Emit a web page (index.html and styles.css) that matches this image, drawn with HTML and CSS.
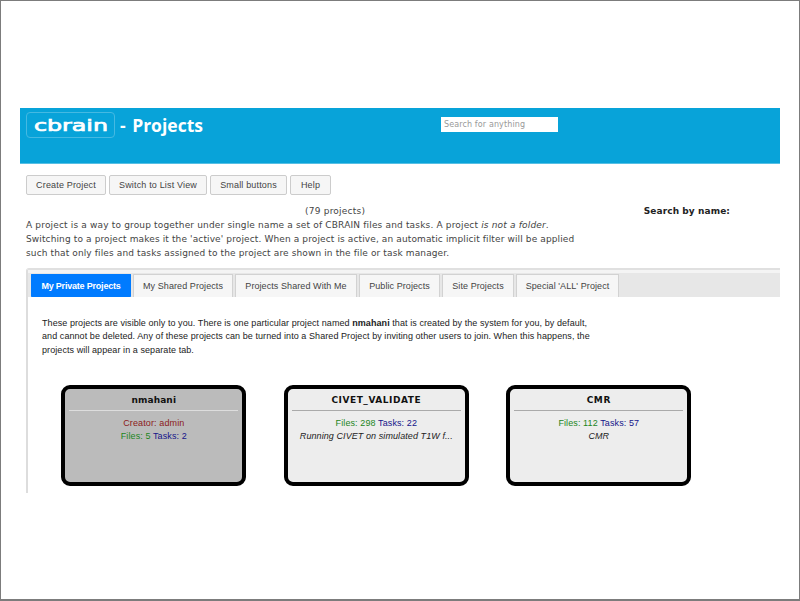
FILE: index.html
```html
<!DOCTYPE html>
<html lang="en">
<head>
<meta charset="utf-8">
<title>CBRAIN - Projects</title>
<link rel="stylesheet" href="styles.css">
</head>
<body>
<div class="page">
  <header class="header">
    <div class="logo"><span class="logo-text">cbrain</span></div>
    <h1 class="title">- Projects</h1>
    <input class="search" type="text" placeholder="Search for anything">
  </header>
  <nav class="actions">
    <button class="btn b1">Create Project</button>
    <button class="btn b2">Switch to List View</button>
    <button class="btn b3">Small buttons</button>
    <button class="btn b4">Help</button>
  </nav>
  <div class="summary">
    <span class="count">(79 projects)</span>
    <strong class="by-name">Search by name:</strong>
  </div>
  <p class="intro">
    <span class="line i1">A project is a way to group together under single name a set of CBRAIN files and tasks. A project <em>is not a folder</em>.</span>
    <span class="line i2">Switching to a project makes it the 'active' project. When a project is active, an automatic implicit filter will be applied</span>
    <span class="line i3">such that only files and tasks assigned to the project are shown in the file or task manager.</span>
  </p>
  <section class="panel">
    <div class="tabs">
      <a class="tab t1 active">My Private Projects</a>
      <a class="tab t2">My Shared Projects</a>
      <a class="tab t3">Projects Shared With Me</a>
      <a class="tab t4">Public Projects</a>
      <a class="tab t5">Site Projects</a>
      <a class="tab t6">Special 'ALL' Project</a>
    </div>
    <p class="about">
      <span class="line a1">These projects are visible only to you. There is one particular project named <b>nmahani</b> that is created by the system for you, by default,</span>
      <span class="line a2">and cannot be deleted. Any of these projects can be turned into a Shared Project by inviting other users to join. When this happens, the</span>
      <span class="line a3">projects will appear in a separate tab.</span>
    </p>
    <div class="cards">
      <article class="card own">
        <h2>nmahani</h2>
        <div class="creator">Creator: admin</div>
        <div class="stats"><span class="files">Files: 5</span> <span class="tasks">Tasks: 2</span></div>
      </article>
      <article class="card">
        <h2>CIVET_VALIDATE</h2>
        <div class="stats"><span class="files">Files: 298</span> <span class="tasks">Tasks: 22</span></div>
        <div class="desc">Running CIVET on simulated T1W f...</div>
      </article>
      <article class="card">
        <h2>CMR</h2>
        <div class="stats"><span class="files">Files: 112</span> <span class="tasks">Tasks: 57</span></div>
        <div class="desc">CMR</div>
      </article>
    </div>
  </section>
</div>
</body>
</html>
```

FILE: styles.css
```css
* { box-sizing: border-box; }
body { margin: 0; background: #fff; font-family: "Liberation Sans", sans-serif; color: #333; }
.page { width: 800px; height: 601px; border: 1px solid #7c7c7c; border-bottom-width: 2px; padding: 107px 19px 0; overflow: hidden; }

.header { display: flex; align-items: flex-start; height: 56px; padding: 4px 0 0 6px; background: #08a3d9; border-bottom: 1px solid #56bfe4; }
.logo { width: 89px; height: 26px; border: 1px solid #45b9e2; border-radius: 4px; display: flex; align-items: center; justify-content: center; }
.logo-text { font: 400 16px/24px "DejaVu Sans", sans-serif; color: #fff; -webkit-text-stroke: .7px #fff; transform: translateY(1px) scaleX(1.48); }
.title { margin: 0 0 0 5px; width: 90px; font: 700 17.5px/26px "Open Sans", sans-serif; word-spacing: 2px; color: #fff; white-space: nowrap; }
.search { margin: 5px 0 0 231px; width: 117px; height: 15px; border: 0; padding: 0 3px; background: #fff; font: 8px/15px "DejaVu Sans", sans-serif; letter-spacing: .12px; outline: 0; }
.search::placeholder { color: #999; opacity: 1; }

.actions { display: flex; gap: 3px; padding: 11px 0 0 6px; }
.btn { height: 20px; padding: 0; border: 1px solid #ccc; border-radius: 2px; background: #f6f6f6; color: #444; font: 9px/18px "Liberation Sans", sans-serif; letter-spacing: .16px; white-space: nowrap; }
.b1 { width: 80px; }
.b2 { width: 98px; }
.b3 { width: 77px; }
.b4 { width: 41px; }

.summary { display: flex; justify-content: space-between; height: 14px; margin-top: 9px; padding: 0 50px 0 285px; font: 9px/14px "DejaVu Sans", sans-serif; color: #444; }
.count { letter-spacing: .22px; }
.by-name { color: #222; letter-spacing: .08px; }
.intro { margin: 0 0 0 6px; font: 9px/14px "DejaVu Sans", sans-serif; color: #444; letter-spacing: .122px; }
.i1 { letter-spacing: .165px; }
.line { display: block; width: max-content; white-space: nowrap; }

.panel { margin: 8px 0 0 6px; height: 225px; border-left: 2px solid #ddd; border-top: 2px solid #e0e0e0; border-top-left-radius: 3px; }
.tabs { display: flex; align-items: flex-end; gap: 2px; height: 27px; padding-left: 3px; background: #e7e7e7; border-top: 3px solid #f4f4f4; }
.tab { height: 23px; border: 1px solid #d2d2d2; border-bottom: 0; background: #f6f6f6; color: #444; font: 9px/22px "Liberation Sans", sans-serif; letter-spacing: .08px; text-align: center; white-space: nowrap; }
.tab.active { background: #007bff; border-color: #007bff; border-radius: 1px; color: #fff; font-weight: 700; letter-spacing: -.2px; }
.t1 { width: 100px; }
.t2 { width: 100px; }
.t3 { width: 122px; }
.t4 { width: 81px; }
.t5 { width: 72px; }
.t6 { width: 103px; }

.about { margin: 19.6px 0 0 14px; font-size: 9px; line-height: 13.8px; letter-spacing: .073px; color: #222; }
.cards { display: flex; gap: 37.5px; margin: 27px 0 0 33.3px; }
.card { width: 185px; height: 101px; border: 4px solid #000; border-radius: 9px; background: #ededed; padding: 1px 4px 0; text-align: center; font-size: 9px; line-height: 13px; letter-spacing: .05px; color: #222; }
.card.own { background: #bbb; }
.card h2 { margin: 0 0 6px; height: 21px; border-bottom: 1px solid #aaa; font: 700 9px/20px "DejaVu Sans", sans-serif; letter-spacing: .55px; color: #111; }
.card.own h2 { border-bottom-color: #ddd; letter-spacing: .1px; }
.creator { margin-top: -1px; line-height: 14px; color: #8b1a1a; letter-spacing: .12px; }
.files { color: #1c861c; }
.tasks { color: #14148a; }
.stats { letter-spacing: .1px; }
.desc { font-style: italic; line-height: 12px; letter-spacing: .08px; }
```
